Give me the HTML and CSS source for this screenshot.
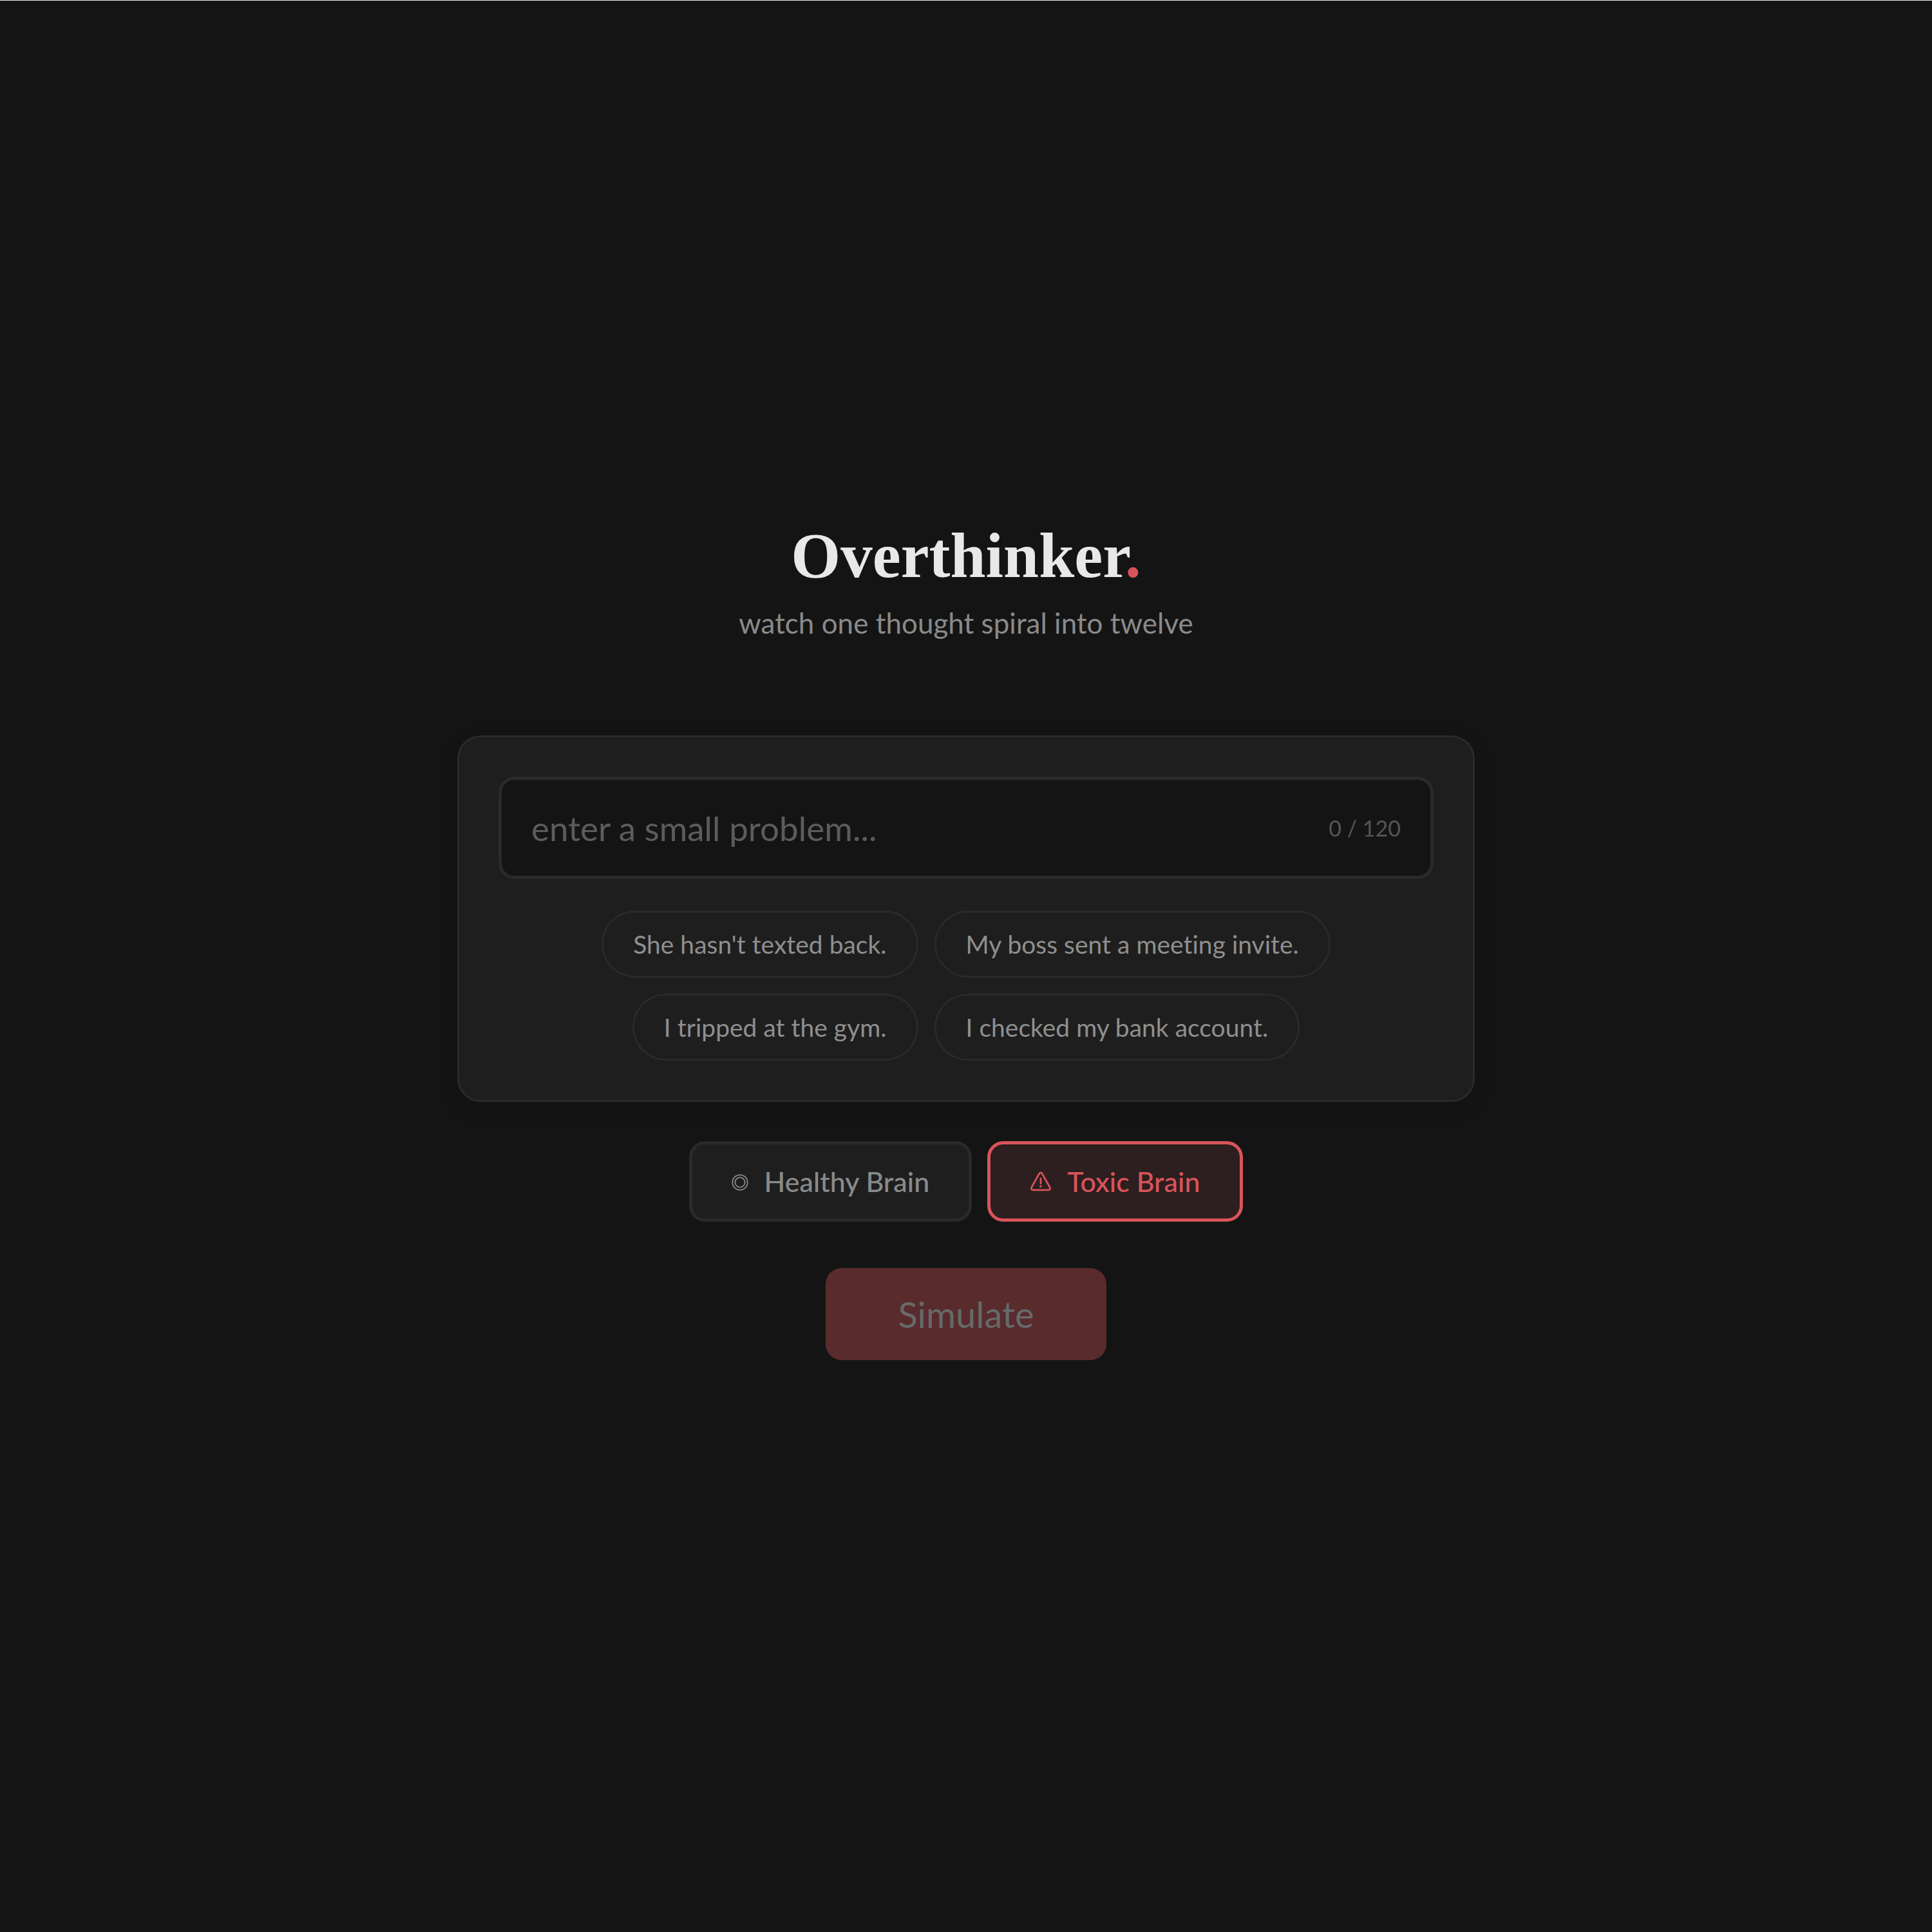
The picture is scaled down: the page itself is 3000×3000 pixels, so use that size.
FILE: index.html
```html
<!DOCTYPE html>
<html lang="en">

<head>
    <meta charset="UTF-8">
    <meta name="viewport" content="width=device-width, initial-scale=1.0">
    <title>Overthinker</title>
    <link rel="stylesheet" href="styles.css">
</head>

<body>
    <main class="app">
        <header class="header">
            <h1 class="title">Overthinker<span class="dot">.</span></h1>
            <p class="tagline">watch one thought spiral into twelve</p>
        </header>

        <section class="card">
            <div class="input-wrap">
                <input type="text" id="problem" class="problem" maxlength="120" placeholder="enter a small problem..." aria-label="Your problem" autocomplete="off">
                <span class="counter" id="counter">0 / 120</span>
            </div>
            <div class="chips">
                <button type="button" class="chip">She hasn't texted back.</button>
                <button type="button" class="chip">My boss sent a meeting invite.</button>
                <button type="button" class="chip">I tripped at the gym.</button>
                <button type="button" class="chip">I checked my bank account.</button>
            </div>
        </section>

        <div class="modes">
            <button type="button" class="mode" aria-pressed="false">
                <svg width="26" height="34" viewBox="0 0 26 34" fill="none" stroke="currentColor" stroke-width="1.8" aria-hidden="true">
                    <circle cx="13" cy="19" r="11.7" />
                    <circle cx="13" cy="19" r="7.6" />
                </svg>
                Healthy Brain
            </button>
            <button type="button" class="mode active" aria-pressed="true">
                <svg width="34" height="34" viewBox="0 0 34 34" fill="none" stroke="currentColor" stroke-width="2.8" stroke-linecap="round" stroke-linejoin="round" aria-hidden="true">
                    <path d="M14.6 5.6 2.8 26.6Q1.2 30.6 5 30.8H29Q32.8 30.6 31.2 26.6L19.4 5.6Q17 2 14.6 5.6Z" />
                    <path d="M17 13v8" />
                    <circle cx="17" cy="25.3" r="1.8" fill="currentColor" stroke="none" />
                </svg>
                Toxic Brain
            </button>
        </div>

        <button type="button" class="simulate" disabled>Simulate</button>
    </main>
</body>

</html>
```
FILE: styles.css
```css
* {
    box-sizing: border-box;
    margin: 0;
    padding: 0;
}

body {
    font-family: Lato, "Liberation Sans", sans-serif;
    font-variant-ligatures: none;
    background: #141414;
    color: #e8e8e6;
    min-height: 100vh;
    border-top: 1px solid #e8e8e6;
    display: flex;
    flex-direction: column;
    justify-content: center;
    align-items: center;
    padding: 0 24px 85px;
}

button,
input {
    font-family: inherit;
    font-variant-ligatures: inherit;
}

button {
    cursor: pointer;
}

.app {
    width: 100%;
    max-width: 1580px;
    display: flex;
    flex-direction: column;
    align-items: center;
}

.header {
    text-align: center;
    margin-bottom: 145px;
}

.title {
    font-family: "Liberation Serif", serif;
    font-size: 99px;
    font-weight: bold;
    line-height: 116px;
}

.dot {
    color: #d8545a;
}

.tagline {
    margin-top: 16px;
    font-size: 44px;
    line-height: 60px;
    color: #8a8a8a;
}

.card {
    width: 100%;
    background: #1e1e1e;
    border: 3px solid #2a2a2a;
    border-radius: 36px;
    padding: 61px;
    box-shadow: 0 10px 30px rgba(0, 0, 0, 0.1);
}

.input-wrap {
    display: flex;
    align-items: center;
    height: 159px;
    background: #141414;
    border: 5px solid #2a2a2a;
    border-radius: 25px;
    padding: 0 46px;
}

.problem {
    flex: 1;
    min-width: 0;
    background: none;
    border: none;
    outline: none;
    font-size: 53px;
    color: #e8e8e6;
}

.problem::placeholder {
    color: #5c5c5c;
}

.counter {
    font-size: 34px;
    color: #555555;
}

.chips {
    display: flex;
    flex-wrap: wrap;
    justify-content: center;
    gap: 25px;
    margin-top: 49px;
    padding: 0 50px;
}

.chip {
    height: 104px;
    padding: 0 46px;
    background: none;
    border: 3px solid #2a2a2a;
    border-radius: 52px;
    font-size: 39px;
    color: #8f8f8f;
}

.modes {
    display: flex;
    gap: 24px;
    margin-top: 61px;
}

.mode {
    display: flex;
    align-items: center;
    gap: 24px;
    height: 125px;
    padding: 0 61px;
    background: #1e1e1e;
    border: 5px solid #2a2a2a;
    border-radius: 25px;
    font-size: 43px;
    font-weight: 500;
    color: #8a8a8a;
}

.mode.active {
    background: #2d1e1f;
    border-color: #d8545a;
    color: #d8545a;
}

.simulate {
    margin-top: 72px;
    height: 143px;
    padding: 0 112px;
    background: #592b2d;
    border: none;
    border-radius: 25px;
    font-size: 56px;
    color: #666a69;
}

.simulate:disabled {
    cursor: not-allowed;
}
```
